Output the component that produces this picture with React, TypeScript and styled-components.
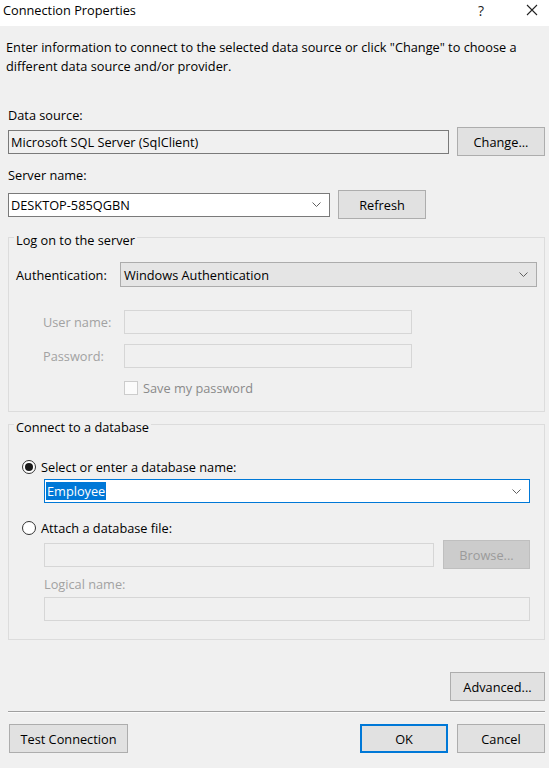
import React from "react";
import styled, { createGlobalStyle } from "styled-components";

const GlobalStyle = createGlobalStyle`
  html, body {
    margin: 0;
    padding: 0;
    background: #f0f0f0;
  }
  body {
    font-family: "Open Sans", "Liberation Sans", sans-serif;
    font-size: 12.75px;
    color: #000;
  }
  *, *::before, *::after {
    box-sizing: border-box;
  }
`;

const Window = styled.div`
  width: 549px;
  height: 768px;
  background: #f0f0f0;
  overflow: hidden;
  display: flex;
  flex-direction: column;
`;

const TitleBar = styled.div`
  flex: none;
  height: 26px;
  background: #fff;
  display: flex;
  align-items: center;
  padding: 0 7px 6px 3px;
`;

const Title = styled.div`
  flex: 1;
  line-height: 18px;
`;

const CaptionButton = styled.div<{ $gap?: number }>`
  width: 20px;
  height: 18px;
  display: flex;
  align-items: center;
  justify-content: center;
  margin-left: ${(p) => p.$gap ?? 0}px;
  font-size: 14px;
  color: #222;
`;

const Content = styled.div`
  flex: 1;
  display: flex;
  flex-direction: column;
  padding: 12px 4px 0 8px;
`;

const Intro = styled.p`
  margin: 0 0 0 -2px;
  line-height: 19px;
`;

const Label = styled.div<{ $top?: number; $indent?: number; $muted?: boolean }>`
  margin-top: ${(p) => p.$top ?? 0}px;
  margin-left: ${(p) => p.$indent ?? 0}px;
  line-height: 18px;
  color: ${(p) => (p.$muted ? "#a2a2a2" : "#000")};
`;

const Row = styled.div<{ $top?: number; $indent?: number; $gap?: number }>`
  display: flex;
  align-items: center;
  margin-top: ${(p) => p.$top ?? 0}px;
  margin-left: ${(p) => p.$indent ?? 0}px;
  gap: ${(p) => p.$gap ?? 0}px;
`;

type FieldKind = "readonly" | "edit" | "disabled" | "focused" | "picker";

const fieldColors: Record<FieldKind, { bg: string; border: string; pad: number }> = {
  readonly: { bg: "#f0f0f0", border: "#7a7a7a", pad: 2 },
  edit: { bg: "#ffffff", border: "#7a7a7a", pad: 2 },
  disabled: { bg: "#f0f0f0", border: "#d6d6d6", pad: 2 },
  focused: { bg: "#ffffff", border: "#0078d7", pad: 1 },
  picker: { bg: "#e5e5e5", border: "#acacac", pad: 3 },
};

const Field = styled.div<{ $kind: FieldKind; $width?: number; $height?: number }>`
  flex: ${(p) => (p.$width ? "none" : "1")};
  width: ${(p) => (p.$width ? `${p.$width}px` : "auto")};
  height: ${(p) => p.$height ?? 24}px;
  display: flex;
  align-items: center;
  padding: 0 8px 0 ${(p) => fieldColors[p.$kind].pad}px;
  background: ${(p) => fieldColors[p.$kind].bg};
  border: 1px solid ${(p) => fieldColors[p.$kind].border};
  white-space: nowrap;
`;

const FieldText = styled.span`
  flex: 1;
  line-height: 16px;
`;

const Selected = styled.span`
  background: #0078d7;
  color: #fff;
  padding: 0 1px;
  line-height: 16px;
`;

const Button = styled.button<{ $width: number; $default?: boolean }>`
  flex: none;
  width: ${(p) => p.$width}px;
  height: 29px;
  padding: 0;
  font: inherit;
  color: #000;
  background: #e1e1e1;
  border: ${(p) => (p.$default ? "2px solid #0078d7" : "1px solid #adadad")};
  &:disabled {
    background: #cccccc;
    border-color: #bfbfbf;
    color: #9b9b9b;
  }
`;

const GroupBox = styled.fieldset<{ $top: number; $pad: string }>`
  margin: ${(p) => p.$top}px 0 0 0;
  padding: ${(p) => p.$pad};
  border: 1px solid #dcdcdc;
  min-width: 0;
  display: flex;
  flex-direction: column;
`;

const Legend = styled.legend<{ $shift: number }>`
  padding: 6px 2px 0;
  margin-left: ${(p) => p.$shift}px;
  line-height: 18px;
`;

const AuthLabel = styled.span`
  flex: none;
  width: 104px;
`;

const CredLabel = styled.span`
  flex: none;
  width: 81px;
  color: #a2a2a2;
`;

const CheckBox = styled.span`
  flex: none;
  width: 14px;
  height: 14px;
  border: 1px solid #cccccc;
  background: #fbfbfb;
`;

const CheckText = styled.span`
  margin-left: 5px;
  line-height: 18px;
  color: #8a8a8a;
`;

const Radio = styled.span<{ $checked?: boolean }>`
  flex: none;
  width: 14px;
  height: 14px;
  border-radius: 50%;
  border: 1px solid #333;
  background: #fff;
  display: flex;
  align-items: center;
  justify-content: center;
  margin-right: 5px;
  &::after {
    content: "";
    width: 8px;
    height: 8px;
    border-radius: 50%;
    background: ${(p) => (p.$checked ? "#1a1a1a" : "transparent")};
  }
`;

const RadioText = styled.span`
  line-height: 18px;
`;

const Separator = styled.div`
  margin-top: 10px;
  height: 2px;
  border-top: 1px solid #a0a0a0;
  border-bottom: 1px solid #fbfbfb;
`;

const Footer = styled.div`
  margin-top: 11px;
  display: flex;
  align-items: center;
  gap: 9px;
  padding-left: 1px;
`;

const Spacer = styled.div`
  flex: 1;
`;

const RightAligned = styled.div`
  margin-top: 32px;
  display: flex;
  justify-content: flex-end;
`;

const Chevron = () => (
  <svg width="9" height="5" viewBox="0 0 9 5" style={{ flex: "none" }}>
    <polyline points="0.5,0.5 4.5,4.5 8.5,0.5" fill="none" stroke="#606060" strokeWidth="1" />
  </svg>
);

const CloseIcon = () => (
  <svg width="12" height="12" viewBox="0 0 12 12">
    <path d="M1 1 L11 11 M11 1 L1 11" stroke="#222" strokeWidth="1.1" fill="none" />
  </svg>
);

export default function App() {
  return (
    <>
      <GlobalStyle />
      <Window>
        <TitleBar>
          <Title>Connection Properties</Title>
          <CaptionButton>?</CaptionButton>
          <CaptionButton $gap={31}>
            <CloseIcon />
          </CaptionButton>
        </TitleBar>

        <Content>
          <Intro>
            Enter information to connect to the selected data source or click "Change" to choose a
            different data source and/or provider.
          </Intro>

          <Label $top={30}>Data source:</Label>
          <Row $top={3} $gap={8}>
            <Field $kind="readonly">
              <FieldText>Microsoft SQL Server (SqlClient)</FieldText>
            </Field>
            <Button $width={88}>Change...</Button>
          </Row>

          <Label $top={10}>Server name:</Label>
          <Row $top={6} $gap={8}>
            <Field $kind="edit" $width={322}>
              <FieldText>DESKTOP-585QGBN</FieldText>
              <Chevron />
            </Field>
            <Button $width={88}>Refresh</Button>
          </Row>

          <GroupBox $top={6} $pad="13px 7px 14px 7px">
            <Legend $shift={-2}>Log on to the server</Legend>
            <Row>
              <AuthLabel>Authentication:</AuthLabel>
              <Field $kind="picker" $height={25}>
                <FieldText>Windows Authentication</FieldText>
                <Chevron />
              </Field>
            </Row>
            <Row $top={23} $indent={27}>
              <CredLabel>User name:</CredLabel>
              <Field $kind="disabled" $width={288} />
            </Row>
            <Row $top={10} $indent={27}>
              <CredLabel>Password:</CredLabel>
              <Field $kind="disabled" $width={288} />
            </Row>
            <Row $top={11} $indent={108}>
              <CheckBox />
              <CheckText>Save my password</CheckText>
            </Row>
          </GroupBox>

          <GroupBox $top={0} $pad="22px 14px 18px 13px">
            <Legend $shift={-8}>Connect to a database</Legend>
            <Row>
              <Radio $checked />
              <RadioText>Select or enter a database name:</RadioText>
            </Row>
            <Row $top={3} $indent={22}>
              <Field $kind="focused">
                <FieldText>
                  <Selected>Employee</Selected>
                </FieldText>
                <Chevron />
              </Field>
            </Row>
            <Row $top={16}>
              <Radio />
              <RadioText>Attach a database file:</RadioText>
            </Row>
            <Row $top={3} $indent={22} $gap={9}>
              <Field $kind="disabled" />
              <Button $width={87} disabled>
                Browse...
              </Button>
            </Row>
            <Label $top={6} $indent={22} $muted>
              Logical name:
            </Label>
            <Row $top={4} $indent={22}>
              <Field $kind="disabled" />
            </Row>
          </GroupBox>

          <RightAligned>
            <Button $width={95}>Advanced...</Button>
          </RightAligned>

          <Separator />

          <Footer>
            <Button $width={119}>Test Connection</Button>
            <Spacer />
            <Button $width={88} $default>
              OK
            </Button>
            <Button $width={88}>Cancel</Button>
          </Footer>
        </Content>
      </Window>
    </>
  );
}
